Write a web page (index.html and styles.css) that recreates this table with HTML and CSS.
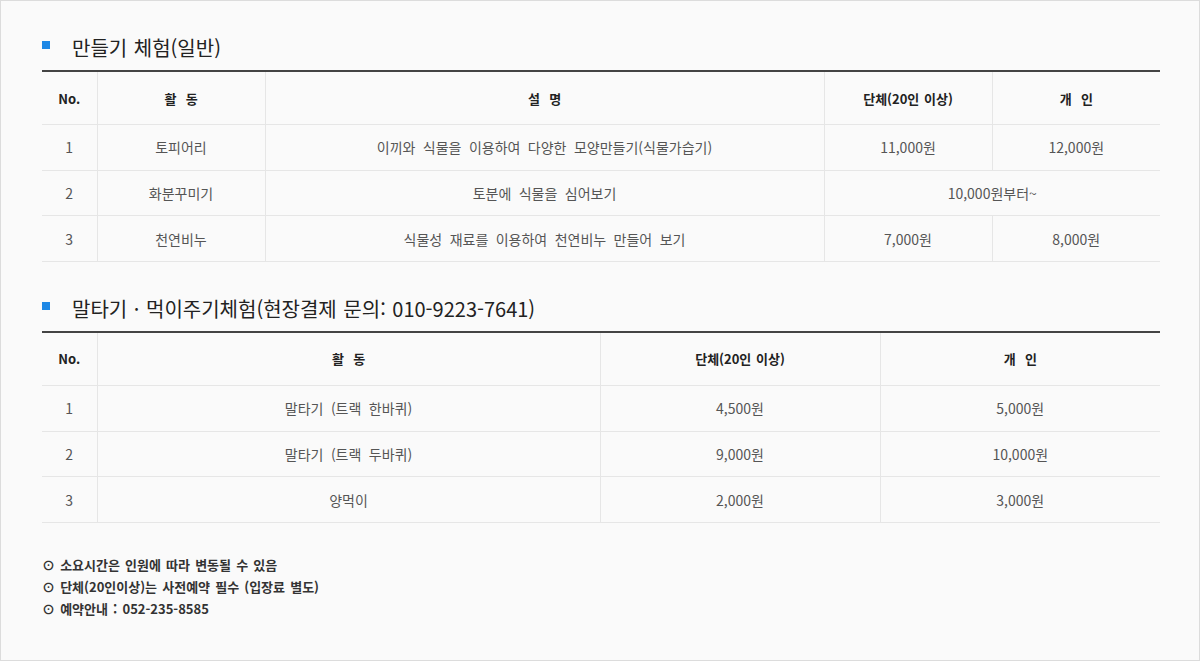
FILE: index.html
```html
<!DOCTYPE html>
<html lang="ko">
<head>
  <meta charset="UTF-8" />
  <meta name="viewport" content="width=device-width, initial-scale=1.0" />
  <title>체험 안내</title>
  <link rel="stylesheet" href="styles.css">
</head>
<body>
  <div id="program-box">
    <h3 class="sec-title">만들기 체험(일반)</h3>
    <table class="price-table">
      <colgroup>
        <col style="width: 55px">
        <col style="width: 168px">
        <col>
        <col style="width: 168px">
        <col style="width: 168px">
      </colgroup>
      <thead>
        <tr>
          <th>No.</th>
          <th>활&nbsp;&nbsp;동</th>
          <th>설&nbsp;&nbsp;명</th>
          <th>단체(20인 이상)</th>
          <th>개&nbsp;&nbsp;인</th>
        </tr>
      </thead>
      <tbody>
        <tr>
          <td>1</td>
          <td>토피어리</td>
          <td>이끼와 식물을 이용하여 다양한 모양만들기(식물가습기)</td>
          <td>11,000원</td>
          <td>12,000원</td>
        </tr>
        <tr>
          <td>2</td>
          <td>화분꾸미기</td>
          <td>토분에 식물을 심어보기</td>
          <td colspan="2">10,000원부터~</td>
        </tr>
        <tr>
          <td>3</td>
          <td>천연비누</td>
          <td>식물성 재료를 이용하여 천연비누 만들어 보기</td>
          <td>7,000원</td>
          <td>8,000원</td>
        </tr>
      </tbody>
    </table>

    <h3 class="sec-title second">말타기 · 먹이주기체험(현장결제 문의: 010-9223-7641)</h3>
    <table class="price-table">
      <colgroup>
        <col style="width: 55px">
        <col>
        <col style="width: 280px">
        <col style="width: 280px">
      </colgroup>
      <thead>
        <tr>
          <th>No.</th>
          <th>활&nbsp;&nbsp;동</th>
          <th>단체(20인 이상)</th>
          <th>개&nbsp;&nbsp;인</th>
        </tr>
      </thead>
      <tbody>
        <tr>
          <td>1</td>
          <td>말타기 (트랙 한바퀴)</td>
          <td>4,500원</td>
          <td>5,000원</td>
        </tr>
        <tr>
          <td>2</td>
          <td>말타기 (트랙 두바퀴)</td>
          <td>9,000원</td>
          <td>10,000원</td>
        </tr>
        <tr>
          <td>3</td>
          <td>양먹이</td>
          <td>2,000원</td>
          <td>3,000원</td>
        </tr>
      </tbody>
    </table>

    <ul class="notes">
      <li>⊙ 소요시간은 인원에 따라 변동될 수 있음</li>
      <li>⊙ 단체(20인이상)는 사전예약 필수 (입장료 별도)</li>
      <li>⊙ 예약안내 : 052-235-8585</li>
    </ul>
  </div>
</body>
</html>
```

FILE: styles.css
```css
body {
  margin: 0;
  font-family: "Noto Sans CJK KR", "Noto Sans", sans-serif;
  background: #fff;
}
#program-box {
  box-sizing: border-box;
  width: 1200px;
  height: 661px;
  border: 1px solid #dcdcdc;
  background: #fafafa;
  padding: 32px 39px 0 41px;
}
.sec-title {
  position: relative;
  margin: 0 0 7px;
  padding-left: 30px;
  font-size: 20px;
  font-weight: normal;
  line-height: 30px;
  word-spacing: 1px;
  color: #222;
}
.sec-title::before {
  content: "";
  position: absolute;
  left: 0;
  top: 8px;
  width: 8px;
  height: 8px;
  background: #1e88e5;
}
.sec-title.second {
  margin-top: 32px;
}
.price-table {
  width: 100%;
  border-collapse: collapse;
  table-layout: fixed;
  border-top: 2px solid #444;
}
.price-table th,
.price-table td {
  text-align: center;
  border-bottom: 1px solid #e6e6e6;
  border-left: 1px solid #e6e6e6;
  padding: 0;
}
.price-table th:first-child,
.price-table td:first-child {
  border-left: none;
}
.price-table th {
  height: 52px;
  font-size: 13px;
  font-weight: bold;
  word-spacing: 1px;
  color: #222;
}
.price-table td {
  height: 44.67px;
  font-size: 14px;
  word-spacing: 3.5px;
  color: #555;
}
.notes {
  list-style: none;
  margin: 31px 0 0;
  padding: 0;
}
.notes li {
  font-size: 13px;
  font-weight: bold;
  line-height: 22px;
  word-spacing: 1.5px;
  color: #333;
}
```
